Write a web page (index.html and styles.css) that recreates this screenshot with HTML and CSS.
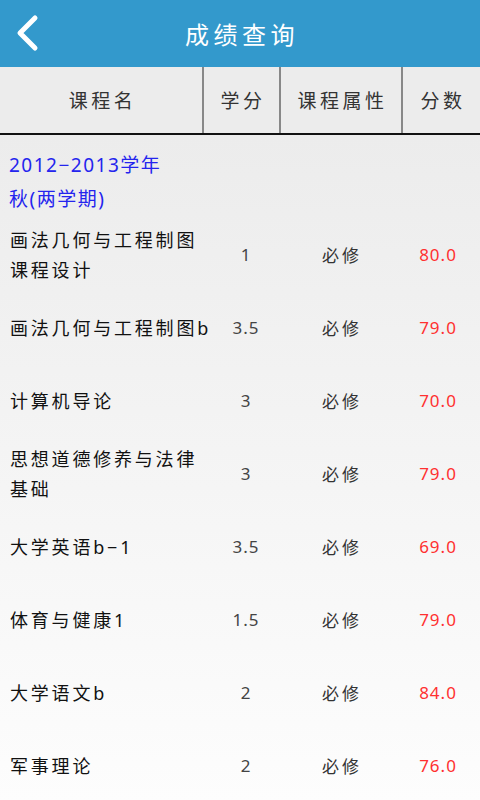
FILE: index.html
```html
<!DOCTYPE html>
<html lang="zh">
<head>
<meta charset="utf-8">
<link rel="stylesheet" href="styles.css">
</head>
<body>
<div class="app">
  <header class="topbar">
    <svg class="back" width="48" height="64" viewBox="0 0 48 64"><polyline points="35,17 20,32 35,47" fill="none" stroke="#fff" stroke-width="5" stroke-linecap="round" stroke-linejoin="round"/></svg>
    <h1 class="title">成绩查询</h1>
  </header>
  <div class="thead">
    <div class="th">课程名</div>
    <div class="th">学分</div>
    <div class="th">课程属性</div>
    <div class="th">分数</div>
  </div>
  <div class="content">
    <div class="term">2012−2013学年<br>秋(两学期)</div>
    <div class="row"><div class="name">画法几何与工程制图课程设计</div><div class="credit">1</div><div class="type">必修</div><div class="score">80.0</div></div>
    <div class="row"><div class="name">画法几何与工程制图b</div><div class="credit">3.5</div><div class="type">必修</div><div class="score">79.0</div></div>
    <div class="row"><div class="name">计算机导论</div><div class="credit">3</div><div class="type">必修</div><div class="score">70.0</div></div>
    <div class="row"><div class="name">思想道德修养与法律基础</div><div class="credit">3</div><div class="type">必修</div><div class="score">79.0</div></div>
    <div class="row"><div class="name">大学英语b−1</div><div class="credit">3.5</div><div class="type">必修</div><div class="score">69.0</div></div>
    <div class="row"><div class="name">体育与健康1</div><div class="credit">1.5</div><div class="type">必修</div><div class="score">79.0</div></div>
    <div class="row"><div class="name">大学语文b</div><div class="credit">2</div><div class="type">必修</div><div class="score">84.0</div></div>
    <div class="row"><div class="name">军事理论</div><div class="credit">2</div><div class="type">必修</div><div class="score">76.0</div></div>
  </div>
</div>
</body>
</html>
```

FILE: styles.css
```css
* { box-sizing: border-box; margin: 0; padding: 0; }
html, body { width: 480px; height: 800px; overflow: hidden; }
body {
  font-family: "Noto Sans", "Noto Sans CJK SC", sans-serif;
  background: #fdfdfd;
}
.app { width: 480px; height: 800px; display: flex; flex-direction: column; overflow: hidden; }
.topbar {
  height: 67px;
  background: #3399cc;
  display: flex;
  align-items: center;
  justify-content: center;
  position: relative;
  flex: none;
}
.back { position: absolute; left: 0; top: 1px; }
.title {
  color: #fff;
  font-weight: normal;
  font-size: 24px;
  letter-spacing: 4.5px;
  margin-left: 4px;
  margin-top: -1px;
}
.thead {
  height: 68px;
  flex: none;
  background: #ececec;
  border-bottom: 2px solid #111;
  display: grid;
  grid-template-columns: 202px 77px 122px 1fr;
}
.th {
  display: flex;
  align-items: center;
  justify-content: center;
  font-size: 19px;
  letter-spacing: 3.5px;
  color: #333;
  padding-left: 3px;
}
.th + .th { border-left: 2px solid #888; }
.content {
  flex: 1;
  background: linear-gradient(#ececec, #fdfdfd);
  padding-top: 13px;
}
.term {
  color: #2424ee;
  font-size: 19px;
  letter-spacing: 1.5px;
  line-height: 34px;
  padding-left: 9px;
  margin-bottom: 2px;
}
.row {
  height: 73px;
  display: grid;
  grid-template-columns: 212px 68px 124px 68px;
  align-items: center;
}
.name {
  padding-left: 10px;
  font-size: 18px;
  letter-spacing: 2.8px;
  line-height: 30px;
  color: #111;
  padding-right: 0;
}
.credit, .type, .score {
  text-align: center;
  font-size: 17px;
  letter-spacing: 1px;
  color: #444;
}
.type { letter-spacing: 3px; color: #333; }
.score { color: #ff3030; }
```
